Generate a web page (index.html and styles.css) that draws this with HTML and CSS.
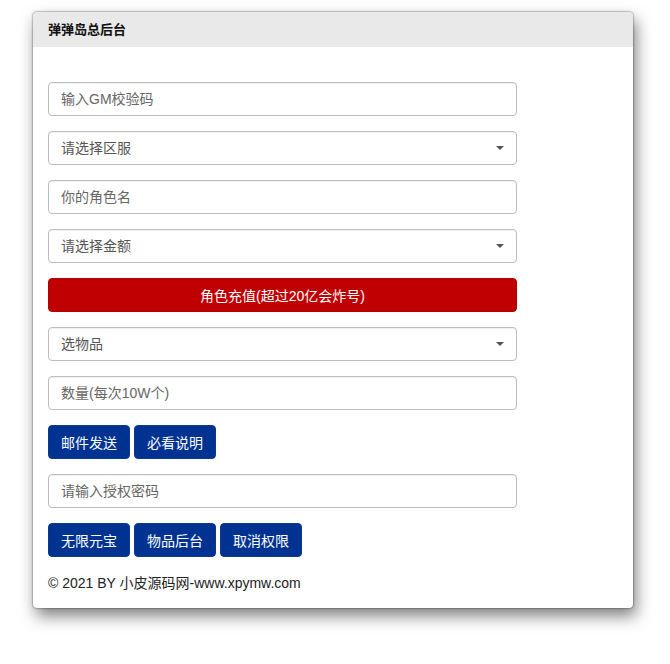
FILE: index.html
```html
<!DOCTYPE html>
<html lang="zh-CN">
<head>
  <meta charset="UTF-8">
  <title>弹弹岛总后台</title>
  <link rel="stylesheet" href="styles.css">
</head>
<body>

  <div class="panel">
    <div class="panel-heading">弹弹岛总后台</div>
    <div class="panel-body">
      <form class="gm-form">
        <input class="field" type="text" placeholder="输入GM校验码">
        <div class="select-box">
          <select class="field">
            <option>请选择区服</option>
          </select>
        </div>
        <input class="field" type="text" placeholder="你的角色名">
        <div class="select-box">
          <select class="field">
            <option>请选择金额</option>
          </select>
        </div>
        <button type="button" class="btn-block red">角色充值(超过20亿会炸号)</button>
        <div class="select-box">
          <select class="field">
            <option>选物品</option>
          </select>
        </div>
        <input class="field" type="text" placeholder="数量(每次10W个)">
        <div class="btn-row">
          <button type="button" class="btn blue">邮件发送</button>
          <button type="button" class="btn blue">必看说明</button>
        </div>
        <input class="field" type="password" placeholder="请输入授权密码">
        <div class="btn-row">
          <button type="button" class="btn blue">无限元宝</button>
          <button type="button" class="btn blue">物品后台</button>
          <button type="button" class="btn blue">取消权限</button>
        </div>
      </form>
      <p class="copy">© 2021 BY 小皮源码网-www.xpymw.com</p>
    </div>
  </div>

</body>
</html>
```

FILE: styles.css
```css
* { margin: 0; padding: 0; box-sizing: border-box; }
html, body {
  min-height: 100%;
  background: #fff;
  font-family: "Liberation Sans", "Noto Sans CJK SC", sans-serif;
  font-size: 14px;
  color: #222;
}
body {
  padding: 12px 0 56px 33px;
}
.panel {
  width: 600px;
  background: #fff;
  border-radius: 4px;
  overflow: hidden;
  box-shadow: 0 0 2px rgba(0,0,0,0.75), 3px 8px 16px rgba(0,0,0,0.5);
}
.panel-heading {
  height: 35px;
  line-height: 35px;
  padding-left: 15px;
  background: #e9e9e9;
  font-size: 13px;
  font-weight: bold;
  color: #111;
}
.panel-body {
  padding: 35px 15px 15px;
}
.gm-form {
  width: 469px;
  display: flex;
  flex-direction: column;
  gap: 15px;
}
.field {
  display: block;
  width: 100%;
  height: 34px;
  padding: 0 12px;
  border: 1px solid #bdbdbd;
  border-radius: 4px;
  background: #fff;
  font-family: inherit;
  font-size: 14px;
  color: #555;
  outline: none;
  box-shadow: inset 0 1px 1px rgba(0,0,0,0.06);
}
.field::placeholder { color: #666; }
select.field {
  appearance: none;
  -webkit-appearance: none;
}
.select-box { position: relative; }
.select-box::after {
  content: "";
  position: absolute;
  right: 13px;
  top: 15px;
  border-left: 4px solid transparent;
  border-right: 4px solid transparent;
  border-top: 4px solid #555;
  pointer-events: none;
}
.btn-block, .btn {
  height: 34px;
  border-radius: 4px;
  font-family: inherit;
  font-size: 14px;
  color: #fff;
  cursor: pointer;
}
.btn-block {
  width: 100%;
  border: 1px solid #b00000;
  background: #c00000;
}
.btn-row {
  display: flex;
  gap: 4px;
}
.btn {
  width: 82px;
  border: 1px solid #0b3a8c;
  background: #003391;
}
.copy {
  margin-top: 16px;
  line-height: 20px;
  font-size: 14px;
  color: #222;
}
```
